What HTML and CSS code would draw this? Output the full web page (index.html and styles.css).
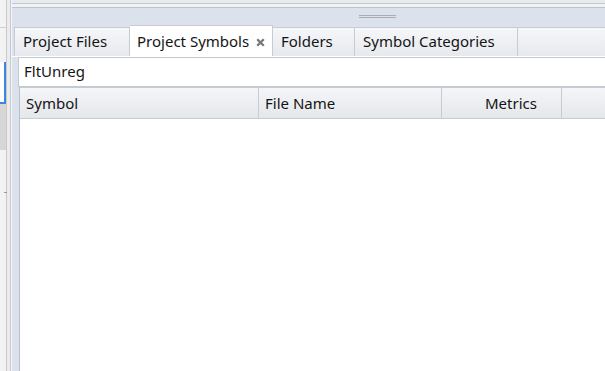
FILE: index.html
```html
<!DOCTYPE html>
<html lang="en">
    <head>
        <meta charset="utf-8">
        <link rel="stylesheet" href="styles.css">
    </head>
    <body>
        <div class="app">
            <div class="side">
                <div class="side-pane">
                    <div class="side-top"></div>
                    <div class="side-gap"></div>
                    <div class="side-focus"></div>
                    <div class="side-block"></div>
                    <div class="side-rest"><span class="side-tick"></span></div>
                </div>
                <div class="side-gutter"></div>
            </div>
            <div class="main">
                <div class="top-edge"></div>
                <div class="grip-bar"><span class="grip"></span></div>
                <div class="tabs">
                    <div class="tab tab-files">Project Files</div>
                    <div class="tab tab-symbols on">Project Symbols
                        <svg class="close" width="9" height="9" viewBox="0 0 9 9">
                            <path d="M1.2 1.2 L7.8 7.8 M7.8 1.2 L1.2 7.8" stroke="#75777a" stroke-width="2.3" fill="none"/>
                        </svg>
                    </div>
                    <div class="tab tab-folders">Folders</div>
                    <div class="tab tab-cats">Symbol Categories</div>
                    <div class="tab tab-fill"></div>
                </div>
                <div class="search">FltUnreg</div>
                <div class="grid">
                    <div class="grid-head">
                        <div class="col col-symbol">Symbol</div>
                        <div class="col col-file">File Name</div>
                        <div class="col col-metrics">Metrics</div>
                        <div class="col col-extra"></div>
                    </div>
                    <div class="grid-body"></div>
                </div>
            </div>
        </div>
    </body>
</html>
```
FILE: styles.css
```css
html, body {
    margin: 0;
    padding: 0;
}
body {
    width: 605px;
    height: 371px;
    overflow: hidden;
    font-family: "Noto Sans", "Open Sans", sans-serif;
    font-size: 14px;
    color: #141414;
}
.app {
    display: flex;
    height: 371px;
}

/* left strip */
.side {
    display: flex;
    width: 11px;
    flex: none;
}
.side-pane {
    width: 6px;
    display: flex;
    flex-direction: column;
    background: #f3f3f3;
    border-right: 1px solid #c9c9c9;
}
.side-top {
    height: 27px;
    border-bottom: 1px solid #cfcfcf;
}
.side-gap {
    height: 34px;
}
.side-focus {
    height: 40px;
    border-right: 2px solid #3d86e0;
    border-bottom: 2px solid #3d86e0;
    background: #ffffff;
}
.side-block {
    height: 46px;
    background: #d6d6d6;
}
.side-rest {
    flex: 1;
    position: relative;
}
.side-tick {
    position: absolute;
    left: 4px;
    top: 42px;
    width: 3px;
    height: 1px;
    background: #9a9a9a;
}
.side-gutter {
    width: 3px;
    background: #ececec;
    border-right: 1px solid #c2c8d0;
}

/* main panel */
.main {
    flex: 1;
    display: flex;
    flex-direction: column;
    background: #dbe2eb;
    border-left: 1px solid #f4f6f9;
}
.top-edge {
    height: 8px;
    background: linear-gradient(#e8eaed 0, #e8eaed 3px, #c3c8cf 3px, #c3c8cf 4px, #f0f2f4 4px, #f0f2f4 7px, #bcc3cc 7px);
}
.grip-bar {
    height: 17px;
    padding-left: 347px;
    box-sizing: border-box;
    padding-top: 7px;
}
.grip {
    display: block;
    width: 37px;
    height: 1px;
    border-top: 1px solid #a9aeb5;
    border-bottom: 1px solid #a9aeb5;
}

/* tabs */
.tabs {
    display: flex;
    align-items: flex-end;
    height: 31px;
    padding-left: 2px;
    border-bottom: 1px solid #ffffff;
}
.tab {
    box-sizing: border-box;
    height: 29px;
    padding: 3px 0 0 8px;
    font-size: 15px;
    line-height: 20px;
    white-space: nowrap;
    background: linear-gradient(#f6f7f9, #e6e9ed);
    border: 1px solid #c7ccd3;
    border-left: none;
    border-bottom: none;
}
.tab-files {
    width: 116px;
    border-left: 1px solid #c7ccd3;
}
.tab-symbols {
    width: 143px;
    padding-left: 7px;
}
.tab-folders {
    width: 82px;
}
.tab-cats {
    width: 163px;
}
.tab-fill {
    flex: 1;
    border-right: none;
}
.tab.on {
    height: 31px;
    padding-top: 5px;
    background: #ffffff;
    border-bottom: none;
}
.close {
    margin-left: 3px;
    vertical-align: 0px;
}

/* filter box */
.search {
    box-sizing: border-box;
    height: 30px;
    margin-left: 6px;
    padding: 3px 0 0 5px;
    font-size: 15px;
    line-height: 20px;
    background: #ffffff;
    border: 1px solid #c3c9d1;
    border-right: none;
}

/* result grid */
.grid {
    flex: 1;
    display: flex;
    flex-direction: column;
    margin-left: 7px;
    background: #ffffff;
    border-left: 1px solid #b9c0ca;
}
.grid-head {
    display: flex;
    height: 32px;
    box-sizing: border-box;
    background: linear-gradient(#f5f6f8, #e4e7eb);
    border-top: 1px solid #c6ccd4;
    border-bottom: 1px solid #c6ccd4;
}
.col {
    box-sizing: border-box;
    padding: 5px 0 0 6px;
    font-size: 15px;
    line-height: 20px;
    border-right: 1px solid #c6ccd4;
}
.col-symbol {
    width: 239px;
}
.col-file {
    width: 183px;
}
.col-metrics {
    width: 120px;
    padding-left: 43px;
}
.col-extra {
    flex: 1;
    border-right: none;
}
.grid-body {
    flex: 1;
}
```
